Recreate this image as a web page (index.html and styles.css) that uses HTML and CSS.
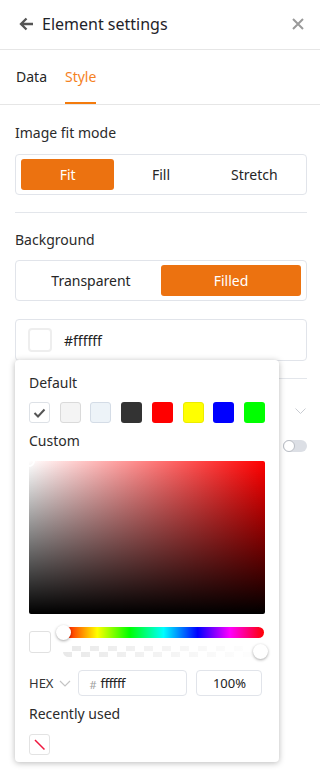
FILE: index.html
```html
<!DOCTYPE html>
<html lang="en">
<head>
<meta charset="utf-8">
<title>Element settings</title>
<link rel="stylesheet" href="styles.css">
</head>
<body>
<div class="panel">
  <header class="header">
    <svg class="back" width="16" height="16" viewBox="0 0 16 16"><path d="M15 8H3M8.5 2.5L3 8l5.5 5.5" fill="none" stroke="#555" stroke-width="2.3"/></svg>
    <h1 class="title">Element settings</h1>
    <svg class="close" width="14" height="14" viewBox="0 0 14 14"><path d="M2 2L12 12M12 2L2 12" fill="none" stroke="#9a9a9a" stroke-width="2"/></svg>
  </header>
  <nav class="tabs">
    <span class="tab">Data</span>
    <span class="tab tab-active">Style</span>
  </nav>
  <div class="content">
    <div class="label">Image fit mode</div>
    <div class="seg">
      <span class="seg-item seg-active">Fit</span>
      <span class="seg-item">Fill</span>
      <span class="seg-item">Stretch</span>
    </div>
    <div class="divider"></div>
    <div class="label">Background</div>
    <div class="seg">
      <span class="seg-item">Transparent</span>
      <span class="seg-item seg-active">Filled</span>
    </div>
    <div class="color-field">
      <span class="field-swatch"></span>
      <span class="field-value">#ffffff</span>
      <div class="picker">
        <div class="p-label">Default</div>
        <div class="swatches">
          <span class="sw sw-white"><svg width="13" height="10" viewBox="0 0 13 10"><path d="M1.5 5l3.5 3.5L11.5 1.5" fill="none" stroke="#555" stroke-width="2"/></svg></span>
          <span class="sw sw-grey"></span>
          <span class="sw sw-ice"></span>
          <span class="sw sw-dark"></span>
          <span class="sw sw-red"></span>
          <span class="sw sw-yellow"></span>
          <span class="sw sw-blue"></span>
          <span class="sw sw-green"></span>
        </div>
        <div class="p-label p-custom">Custom</div>
        <div class="sv-area"><span class="sv-thumb"></span></div>
        <div class="sliders">
          <span class="preview"></span>
          <div class="bars">
            <div class="bar hue"><span class="thumb thumb-hue"></span></div>
            <div class="bar alpha"><span class="thumb thumb-alpha"></span></div>
          </div>
        </div>
        <div class="hex-row">
          <span class="hex-mode">HEX</span>
          <svg class="hex-chev" width="12" height="7" viewBox="0 0 12 7"><path d="M1 1l5 5 5-5" fill="none" stroke="#c4c4c4" stroke-width="1.2"/></svg>
          <span class="input hex-input"><span class="hash">#</span><span class="hex-val">ffffff</span></span>
          <span class="input pct-input">100%</span>
        </div>
        <div class="p-label p-recent">Recently used</div>
        <span class="recent"><svg width="19" height="19" viewBox="0 0 19 19"><path d="M5 5l9.5 9.5" stroke="#f0173e" stroke-width="1.5"/></svg></span>
      </div>
    </div>
    <div class="divider"></div>
    <div class="row row-collapse">
      <svg width="11" height="6" viewBox="0 0 11 6"><path d="M0.5 0.5l5 5 5-5" fill="none" stroke="#c9ccd2" stroke-width="1"/></svg>
    </div>
    <div class="row row-toggle">
      <span class="toggle"><span class="knob"></span></span>
    </div>
  </div>
</div>
</body>
</html>
```

FILE: styles.css
```css
* { box-sizing: border-box; }
html, body { margin: 0; padding: 0; background: #fff; }
body {
  font-family: "Noto Sans", "Open Sans", sans-serif;
  color: #2b2b2b;
  font-size: 14px;
  width: 320px;
  height: 778px;
  overflow: hidden;
}
.panel { width: 320px; }

.header {
  height: 50px;
  border-bottom: 1px solid #e6e6e6;
  display: flex;
  align-items: center;
  padding: 0 15px 1px 18px;
}
.back { display: block; flex: none; }
.title {
  margin: 0 0 0 8px;
  font-size: 16px;
  font-weight: 400;
  color: #1f2329;
  line-height: 20px;
}
.close { margin-left: auto; display: block; flex: none; }

.tabs {
  height: 55px;
  border-bottom: 1px solid #e6e6e6;
  display: flex;
  gap: 18px;
  padding-left: 16px;
}
.tab {
  display: flex;
  align-items: center;
  position: relative;
  font-size: 14px;
  color: #262626;
  padding-bottom: 1px;
}
.tab-active { color: #f5821f; }
.tab-active::after {
  content: "";
  position: absolute;
  left: 0; right: 0; bottom: 0;
  height: 2px;
  background: #f47b0c;
}

.content { padding: 18px 13px 0 15px; }
.label { font-size: 14px; line-height: 20px; color: #2b2b2b; }
.seg {
  margin-top: 11px;
  height: 41px;
  border: 1px solid #e1e4ea;
  border-radius: 4px;
  padding: 4px 5px;
  display: flex;
}
.seg-item {
  flex: 1;
  display: flex;
  align-items: center;
  justify-content: center;
  font-size: 14px;
  color: #262626;
  border-radius: 3px;
}
.seg-active { background: #ec7210; color: #fff; }
.divider { height: 1px; background: #e3e6eb; margin: 17px 0; }
.divider + .label { margin-top: 0; }
.label + .seg { margin-top: 10px; }
.content > .label:first-child + .seg { margin-top: 11px; }

.color-field {
  position: relative;
  margin-top: 18px;
  height: 42px;
  border: 1px solid #e1e4ea;
  border-radius: 4px;
  display: flex;
  align-items: center;
  padding-left: 12px;
}
.color-field + .divider { margin-top: 17px; }
.field-swatch {
  width: 24px; height: 24px;
  border: 2px solid #eeeeee;
  border-radius: 4px;
  background: #fff;
}
.field-value { margin-left: 12px; font-size: 14px; color: #222; }

.picker {
  position: absolute;
  left: -1px;
  top: 40px;
  width: 264px;
  height: 402px;
  background: #fff;
  border-radius: 4px;
  box-shadow: 0 1px 6px rgba(0,0,0,0.28);
  padding: 13px 14px 7px 14px;
  z-index: 5;
}
.p-label { font-size: 14px; line-height: 20px; color: #2b2b2b; }
.swatches {
  margin-top: 9px;
  display: flex;
  justify-content: space-between;
}
.sw {
  width: 21px; height: 21px;
  border-radius: 3px;
  display: flex;
  align-items: center;
  justify-content: center;
}
.sw-white { background: #fff; border: 1px solid #dde1e6; }
.sw-grey { background: #f4f4f4; border: 1px solid #dadada; }
.sw-ice { background: #edf3f8; border: 1px solid #d4dce6; }
.sw-dark { background: #333333; }
.sw-red { background: #ff0000; }
.sw-yellow { background: #ffff00; border: 1px solid #ecec00; }
.sw-blue { background: #0000ff; }
.sw-green { background: #00ff00; }
.p-custom { margin-top: 8px; }
.sv-area {
  position: relative;
  margin-top: 10px;
  height: 153px;
  border-radius: 2px;
  overflow: hidden;
  background:
    linear-gradient(to top, #000, rgba(0,0,0,0)),
    linear-gradient(to right, #fff, #ff0000);
}
.sv-thumb {
  position: absolute;
  left: -6px; top: -6px;
  width: 12px; height: 12px;
  border: 2px solid #fff;
  border-radius: 50%;
}
.sliders {
  margin-top: 13px;
  display: flex;
  align-items: center;
  gap: 12px;
}
.preview {
  width: 22px; height: 22px;
  border: 1px solid #e1e1e1;
  border-radius: 3px;
  background: #fff;
  flex: none;
}
.bars {
  flex: 1;
  display: flex;
  flex-direction: column;
  gap: 8px;
  padding-right: 1px;
}
.bar { position: relative; height: 11px; border-radius: 6px; }
.hue {
  background: linear-gradient(to right, #f00 0%, #ff0 17%, #0f0 33%, #0ff 50%, #00f 67%, #f0f 83%, #f00 100%);
}
.alpha {
  background:
    linear-gradient(to right, rgba(255,255,255,0), #fff),
    repeating-conic-gradient(#e9e9e9 0% 25%, #fff 0% 50%) 0 0 / 18px 11px;
}
.thumb {
  position: absolute;
  top: -2px;
  width: 15px; height: 15px;
  border-radius: 50%;
  background: #fff;
  box-shadow: 0 1px 3px rgba(0,0,0,0.35);
}
.thumb-hue { left: -7px; }
.thumb-alpha { right: -4px; }

.hex-row {
  margin-top: 13px;
  height: 26px;
  display: flex;
  align-items: center;
}
.hex-mode { font-size: 13px; color: #333; }
.hex-chev { margin-left: 6px; display: block; }
.input {
  height: 26px;
  border: 1px solid #e1e4ea;
  border-radius: 4px;
  display: flex;
  align-items: center;
  font-size: 13px;
  color: #222;
}
.hex-input { margin-left: 7px; width: 109px; padding-left: 10px; }
.hash { font-size: 11px; color: #a0a0a0; margin-top: 3px; margin-right: 4px; }
.hex-val { letter-spacing: -0.4px; }
.pct-input { margin-left: 9px; width: 66px; justify-content: center; }
.p-recent { margin-top: 8px; }
.recent {
  margin-top: 10px;
  width: 21px; height: 21px;
  border: 1px solid #e3e3e3;
  border-radius: 3px;
  display: block;
  background: #fff;
}
.recent svg { display: block; margin: 0; }

.row { display: flex; justify-content: flex-end; align-items: center; }
.row-collapse { margin-top: 12px; height: 30px; padding-right: 1px; }
.row-toggle { margin-top: 5px; height: 30px; }
.toggle {
  width: 24px; height: 12px;
  border-radius: 6px;
  background: #dcdfe5;
  position: relative;
  display: block;
}
.knob {
  position: absolute;
  left: 0; top: 0;
  width: 12px; height: 12px;
  border-radius: 50%;
  background: #fff;
  border: 1px solid #b9bdc4;
}
```
